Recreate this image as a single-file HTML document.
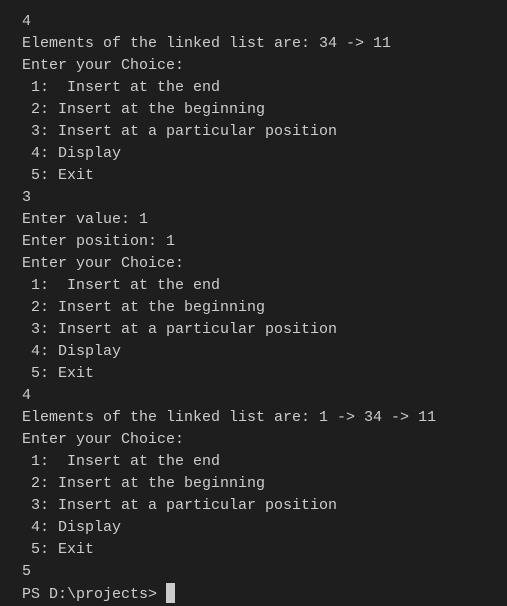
<!DOCTYPE html>
<html><head><style>
html,body{margin:0;padding:0;background:#1e1e1e;width:507px;height:606px;overflow:hidden}
pre{margin:0;position:absolute;left:22px;top:11px;font-family:"Liberation Mono",monospace;font-size:15px;line-height:22px;color:#cccccc;white-space:pre}
.c{display:inline-block;width:9px;height:20px;background:#cccccc;vertical-align:-5px}
</style></head><body><pre>4
Elements of the linked list are: 34 -&gt; 11
Enter your Choice:
 1:  Insert at the end
 2: Insert at the beginning
 3: Insert at a particular position
 4: Display
 5: Exit
3
Enter value: 1
Enter position: 1
Enter your Choice:
 1:  Insert at the end
 2: Insert at the beginning
 3: Insert at a particular position
 4: Display
 5: Exit
4
Elements of the linked list are: 1 -&gt; 34 -&gt; 11
Enter your Choice:
 1:  Insert at the end
 2: Insert at the beginning
 3: Insert at a particular position
 4: Display
 5: Exit
5
PS D:\projects&gt; <span class="c"></span></pre></body></html>
